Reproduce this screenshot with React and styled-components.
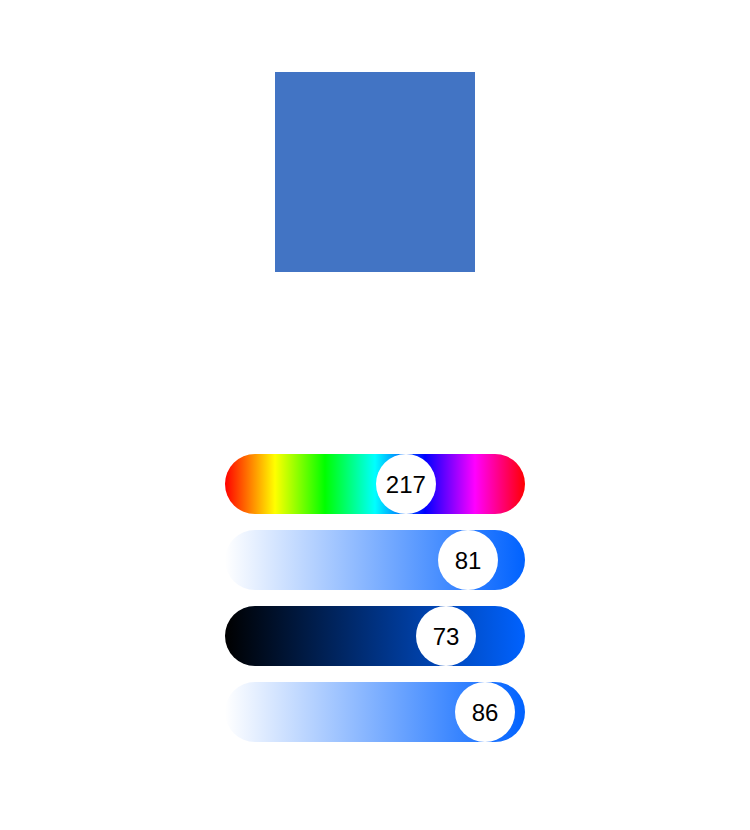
import React from "react"
import styled, { createGlobalStyle } from "styled-components"

const GlobalStyle = createGlobalStyle`
  body {
    margin: 0;
    background: #ffffff;
    font-family: "Liberation Sans", Arial, sans-serif;
  }
`

const Page = styled.div`
  display: flex;
  flex-direction: column;
  align-items: center;
  padding-top: 72px;
`

const Swatch = styled.div`
  width: 200px;
  height: 200px;
  background: ${({ color }) => color};
`

const Sliders = styled.div`
  margin-top: 182px;
  display: flex;
  flex-direction: column;
  gap: 16px;
`

const Track = styled.div`
  position: relative;
  width: 300px;
  height: 60px;
  border-radius: 30px;
  background: ${({ gradient }) => gradient};
`

const Thumb = styled.div`
  position: absolute;
  top: 0;
  width: 60px;
  height: 60px;
  border-radius: 50%;
  background: #ffffff;
  display: flex;
  align-items: center;
  justify-content: center;
  font-size: 24px;
  line-height: 1;
  padding-top: 1px;
  box-sizing: border-box;
  color: #000000;
`

const HUE = "linear-gradient(to right, #ff0000, #ffff00, #00ff00, #00ffff, #0000ff, #ff00ff, #ff0000)"
const BLUE = "#0062ff"

const sliders = [
  { label: 217, fraction: 217 / 360, gradient: HUE },
  { label: 81, fraction: 0.81, gradient: `linear-gradient(to right, #ffffff, ${BLUE})` },
  { label: 73, fraction: 0.737, gradient: `linear-gradient(to right, #000000, ${BLUE})` },
  { label: 86, fraction: 0.867, gradient: `linear-gradient(to right, #ffffff, ${BLUE})` },
]

const App = () => (
  <>
    <GlobalStyle />
    <Page>
      <Swatch color="#4274c4" />
      <Sliders>
        {sliders.map((s, i) => (
          <Track key={i} gradient={s.gradient}>
            <Thumb style={{ left: `${s.fraction * 300 - 30}px` }}>{s.label}</Thumb>
          </Track>
        ))}
      </Sliders>
    </Page>
  </>
)

export default App
